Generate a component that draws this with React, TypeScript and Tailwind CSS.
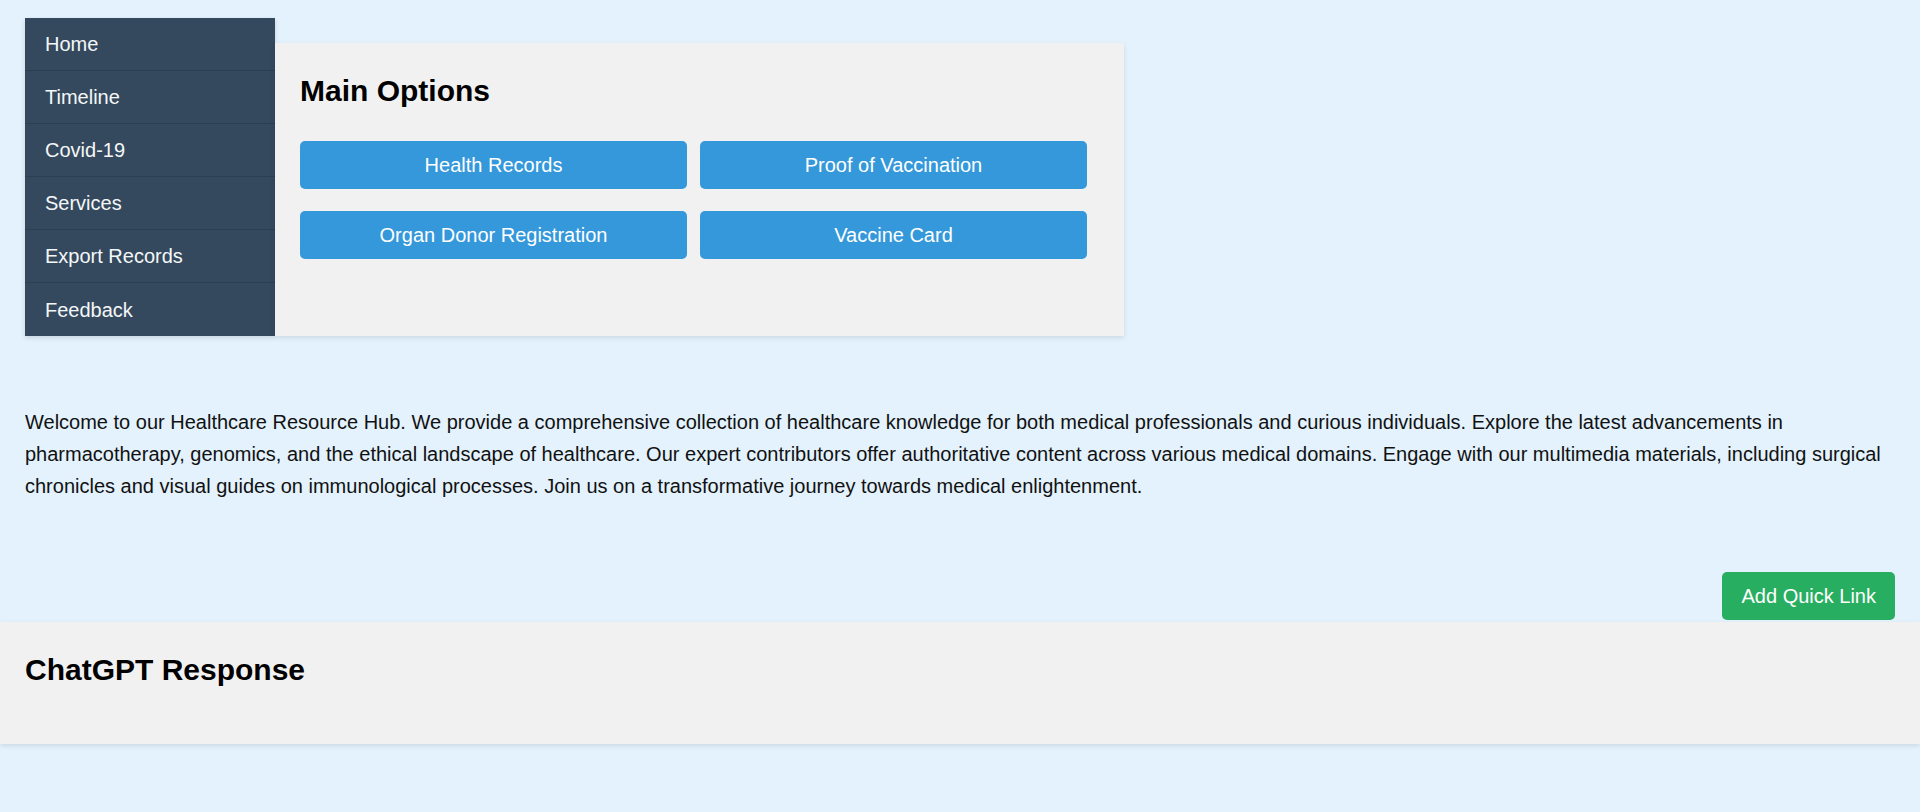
import React from 'react';

const NAV_ITEMS = ['Home', 'Timeline', 'Covid-19', 'Services', 'Export Records', 'Feedback'];
const OPTIONS = ['Health Records', 'Proof of Vaccination', 'Organ Donor Registration', 'Vaccine Card'];

export default function App() {
    return (
        <div className="min-h-[812px] w-full bg-[#e3f2fd] pt-[18px] text-[#111] font-['Liberation_Sans',Arial,sans-serif]">
            <div className="flex items-stretch px-[25px]">
                <nav className="w-[250px] bg-[#34495e] shadow-[0_2px_5px_rgba(0,0,0,0.12)]">
                    {NAV_ITEMS.map(item => (
                        <a
                            key={item}
                            href="#"
                            className="flex h-[53px] items-center border-b border-[#2c3e50] px-[20px] text-[20px] text-[#f4f7f8] last:border-b-0"
                        >
                            {item}
                        </a>
                    ))}
                </nav>

                <div className="mt-[25px] w-[849px] bg-[#f1f1f1] pl-[25px] pt-[31px] shadow-[0_2px_5px_rgba(0,0,0,0.1)]">
                    <h2 className="text-[30px] font-bold leading-[34px] text-black">Main Options</h2>
                    <div className="mt-[33px] grid w-[787px] grid-cols-2 gap-x-[13px] gap-y-[22px]">
                        {OPTIONS.map(option => (
                            <button
                                key={option}
                                className="h-[48px] rounded-[5px] bg-[#3498db] text-[20px] text-white"
                            >
                                {option}
                            </button>
                        ))}
                    </div>
                </div>
            </div>

            <p className="mt-[70px] px-[25px] text-[20px] leading-[32px] text-[#111]">
                Welcome to our Healthcare Resource Hub. We provide a comprehensive collection of healthcare knowledge for both medical professionals and curious individuals. Explore the latest advancements in pharmacotherapy, genomics, and the ethical landscape of healthcare. Our expert contributors offer authoritative content across various medical domains. Engage with our multimedia materials, including surgical chronicles and visual guides on immunological processes. Join us on a transformative journey towards medical enlightenment.
            </p>

            <div className="mt-[70px] flex justify-end px-[25px]">
                <button className="h-[48px] rounded-[5px] bg-[#27ae60] px-[19px] text-[20px] text-white">
                    Add Quick Link
                </button>
            </div>

            <section className="mt-[2px] h-[122px] bg-[#f1f1f1] px-[25px] pt-[30px] shadow-[0_2px_5px_rgba(0,0,0,0.1)]">
                <h2 className="text-[30px] font-bold leading-[35px] text-black">ChatGPT Response</h2>
            </section>
        </div>
    );
}
